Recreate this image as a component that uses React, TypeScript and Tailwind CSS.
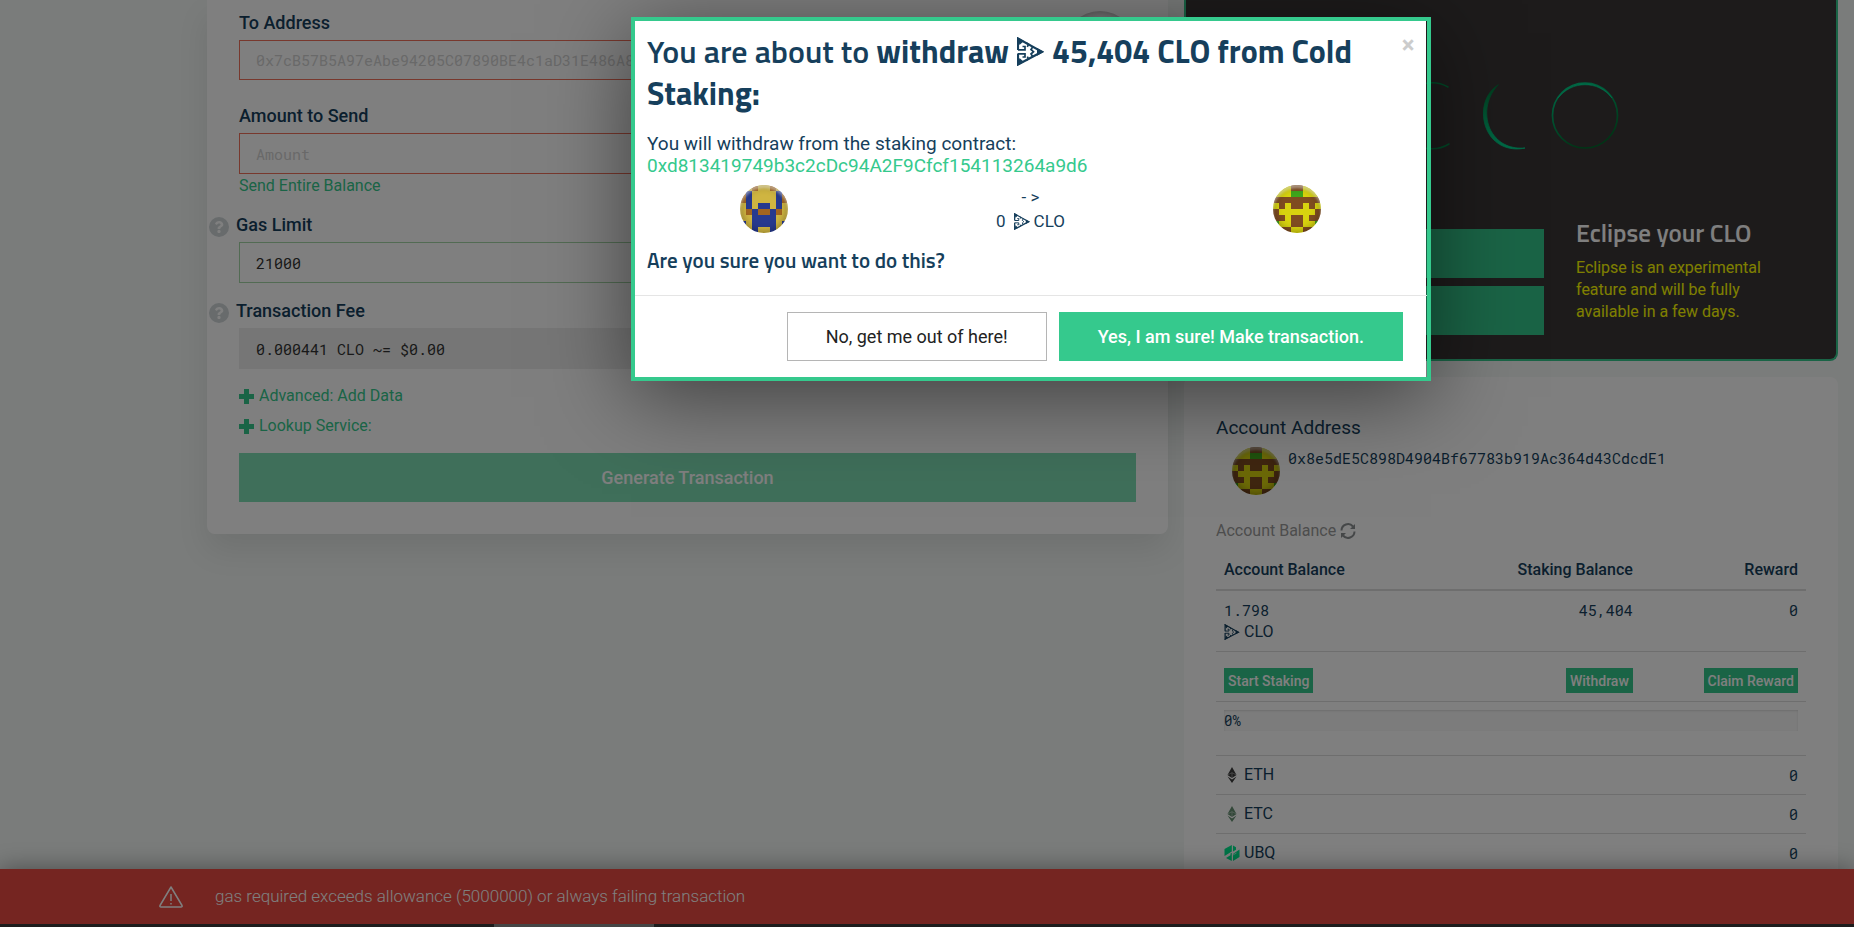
import type { ReactNode } from 'react';
import { FaQuestion } from 'react-icons/fa';

// Identicons are 8x8 and mirrored, so only the left half of each row is stored
const PUMPKIN = {
  colors: ['#d8d30f', '#7f4c20', '#3fa51b'],
  rows: ['0001', '0002', '1111', '0101', '1000', '1101', '2001', '1110'],
};

const CONTRACT = {
  colors: ['#cfb541', '#273a8f', '#a3651f'],
  rows: ['0020', '2100', '2100', '0101', '0212', '0011', '1011', '0010'],
};

const TOKENS = ['ETH', 'ETC', 'UBQ'];

const Identicon = ({ data, label }: { data: typeof PUMPKIN; label: string }) => (
  <div className="relative w-12 h-12 rounded-full overflow-hidden shrink-0">
    <svg viewBox="0 0 8 8" className="block w-full h-full" shapeRendering="crispEdges" role="img" aria-label={label}>
      {data.rows.map((row, y) =>
        (row + row.split('').reverse().join('')).split('').map((c, x) => (
          <rect key={`${x}-${y}`} x={x} y={y} width="1" height="1" fill={data.colors[Number(c)]} />
        ))
      )}
    </svg>
    <div className="absolute inset-0 rounded-full shadow-[inset_0_3px_3px_rgba(255,255,255,0.45),inset_0_0_8px_rgba(0,0,0,0.4)]" />
  </div>
);

const CloLogo = ({ className }: { className?: string }) => (
  <svg viewBox="0 0 27 29" className={className} fill="none" stroke="currentColor" aria-hidden="true">
    <path d="M1 13V1.500L25 14.800L1 27.500V16.500" strokeWidth="2.200" />
    <path d="M0 0l7 4-4.500 4zM0 29l7-4-4.500-4z" fill="currentColor" stroke="none" />
    <path d="M27 14.800l-7-3.900v7.800z" fill="currentColor" stroke="none" />
    <path d="M1 12.800h7V9.500H5.500M1 16.800h7V20H5.500" strokeWidth="1.700" />
    <path d="M9 5.800l2.500 1.600-1.200 2.400M9 23.500l2.500-1.600-1.200-2.200" strokeWidth="1.700" />
    <path d="M16 9.500l-2 3 2.500 2.200-2.500 2.300 2 3" strokeWidth="1.700" />
  </svg>
);

const TokenIcon = ({ name }: { name: string }) => {
  if (name === 'UBQ') {
    return (
      <svg viewBox="0 0 16 16" className="w-4 h-4" fill="#00ea90" aria-hidden="true">
        <path d="M7.800 0v6.500L.5 11V4z" />
        <path d="M2 13l4.500-2.800V8.500l1.300-.8v8.300z" />
        <path d="M9 .5l3 1.700v2.600L9 6.500z" />
        <path d="M15.500 4.500V12L9 16V9l6.500-4.500z" />
        <path d="M9 10l3.500-2" stroke="#fff" strokeWidth=".6" />
      </svg>
    );
  }
  const fill = name === 'ETH' ? '#3c3c3c' : '#669073';
  return (
    <svg viewBox="0 0 16 16" className="w-4 h-4" aria-hidden="true">
      <path d="M8 0l4.500 8L8 11 3.500 8z" fill={fill} />
      <path d="M8 16l4.500-6.500-4.500 3-4.500-3z" fill={fill} />
      <path d="M3.500 8L8 5.700 12.500 8M8 5.700V11" stroke="#fff" strokeWidth=".6" strokeOpacity=".6" fill="none" />
    </svg>
  );
};

const PlusIcon = () => (
  <svg viewBox="0 0 15 15" className="w-[15px] h-[15px]" fill="currentColor" aria-hidden="true">
    <path d="M5 0h5v5h5v5h-5v5H5v-5H0V5h5z" />
  </svg>
);

const RefreshIcon = () => (
  <svg viewBox="0 0 16 16" className="w-4 h-4" fill="none" stroke="#8b8f91" strokeWidth="2" aria-hidden="true">
    <path d="M1.500 7.500A6.500 6.500 0 0 1 13 3.500M14.500 8.500A6.500 6.500 0 0 1 3 12.500" />
    <path d="M15 1v5h-5zM1 15v-5h5z" fill="#8b8f91" stroke="none" />
  </svg>
);

const FieldLabel = ({ htmlFor, children }: { htmlFor: string; children: ReactNode }) => (
  <label htmlFor={htmlFor} className="block mb-[5px] leading-6 text-lg font-medium text-[#163f5c]">
    {children}
  </label>
);

const HelpLabel = ({ htmlFor, children }: { htmlFor: string; children: ReactNode }) => (
  <div className="flex items-start gap-[7px] -ml-[30px]">
    <button
      type="button"
      aria-label="Help"
      className="mt-1 flex items-center justify-center w-5 h-5 rounded-full bg-[#d0d7d9] text-white"
    >
      <FaQuestion className="w-3 h-3" />
    </button>
    <FieldLabel htmlFor={htmlFor}>{children}</FieldLabel>
  </div>
);

const inputClass =
  'block w-full px-4 border font-["Roboto_Mono","Liberation_Mono",monospace] text-[15px] text-[#333] placeholder:text-[#d2d2d2]';

const SendForm = () => (
  <section className="px-8 pt-[11px] pb-8 bg-white rounded-b-lg shadow-[0_16px_32px_rgba(0,0,0,0.09)]">
    <div className="flex gap-4 h-[70px]">
      <div className="flex-1">
        <FieldLabel htmlFor="to">To Address</FieldLabel>
        <input id="to" className={`${inputClass} h-10 border-[#f0705a]`} placeholder="0x7cB57B5A97eAbe94205C07890BE4c1aD31E486A8" />
      </div>
      <div className="w-[72px] h-[72px] rounded-full bg-[#f4f4f4] shadow-[inset_0_2px_6px_rgba(0,0,0,0.25)]" />
    </div>

    <div className="mt-[23px]">
      <FieldLabel htmlFor="amount">Amount to Send</FieldLabel>
      <input id="amount" className={`${inputClass} h-[41px] border-[#f0705a]`} placeholder="Amount" />
      <a href="#balance" className="block leading-[23px] text-base text-[#35c98d]">Send Entire Balance</a>
    </div>

    <div className="mt-4">
      <HelpLabel htmlFor="gas">Gas Limit</HelpLabel>
      <input id="gas" className={`${inputClass} h-[41px] border-[#a5d6a7]`} defaultValue="21000" />
    </div>

    <div className="mt-4">
      <HelpLabel htmlFor="fee">Transaction Fee</HelpLabel>
      <input id="fee" className={`${inputClass} h-[41px] border-[#ececec] bg-[#ececec]`} defaultValue="0.000441 CLO ~= $0.00" readOnly />
    </div>

    <div className="mt-3 text-base leading-[30px] text-[#35c98d]">
      <a href="#advanced" className="flex items-center gap-[5px]">
        <PlusIcon />
        Advanced: Add Data
      </a>
      <a href="#lookup" className="flex items-center gap-[5px]">
        <PlusIcon />
        Lookup Service:
      </a>
    </div>

    <button type="button" className="mt-3 w-full h-[49px] bg-[#7edeb4] text-lg font-medium text-white">
      Generate Transaction
    </button>
  </section>
);

const EclipsePanel = () => (
  <section className="px-8 pb-6 bg-[#3a3637] border-2 border-t-0 border-[#35c98d] rounded-b-lg">
    <svg viewBox="0 0 586 229" className="block w-full" fill="none" strokeLinecap="round" aria-hidden="true">
      <defs>
        <linearGradient id="ring" x1="0" y1="0" x2="0.4" y2="1">
          <stop offset="0" stopColor="#00d890" />
          <stop offset="1" stopColor="#006a2c" />
        </linearGradient>
        <linearGradient id="arc" x1="0" y1="0" x2="0" y2="1">
          <stop offset="0" stopColor="#007a3c" />
          <stop offset="1" stopColor="#00d890" />
        </linearGradient>
      </defs>
      <path d="M230 87A33 33 0 1 0 231 144" stroke="#00904c" strokeWidth="1.500" />
      <path
        d="M280 85C264 95 262 117 270 132C278 147 294 151 307 148C294 149 281 145 273 131C266 117 267 99 280 85Z"
        fill="url(#arc)"
        stroke="url(#arc)"
        strokeWidth="0.800"
      />
      <circle cx="367" cy="115.500" r="32.500" stroke="url(#ring)" strokeWidth="1.700" />
      <path d="M340 98A32.500 32.500 0 0 1 394 98A34 34 0 0 0 340 98Z" fill="#00d890" stroke="#00d890" strokeWidth="0.600" />
    </svg>
    <div className="grid grid-cols-[326fr_228fr] gap-8">
      <div className="flex flex-col gap-2">
        <button type="button" aria-label="Stake" className="h-[49px] bg-[#35c98d]" />
        <button type="button" aria-label="Eclipse" className="h-[49px] bg-[#35c98d]" />
      </div>
      <div className="-mt-[13px]">
        <h3 className="font-['Titillium_Web',Roboto,sans-serif] text-[25px] leading-[34px] font-semibold text-white">Eclipse your CLO</h3>
        <p className="mt-[7px] text-base leading-[22px] text-[#ff0]">
          Eclipse is an experimental feature and will be fully available in a few days.
        </p>
      </div>
    </div>
  </section>
);

const smallButton = 'h-[25px] px-1 bg-[#35c98d] text-sm font-medium text-white';

const AccountPanel = () => (
  <section className="mt-4 px-8 pt-[39px] pb-10 bg-white rounded-lg text-[#163f5c]">
    <h4 className="text-[19px] leading-6">Account Address</h4>
    <div className="flex gap-2 mt-[7px] ml-4">
      <Identicon data={PUMPKIN} label="Account identicon" />
      <p className="font-['Roboto_Mono','Liberation_Mono',monospace] text-[15px] leading-[22px]">
        0x8e5dE5C898D4904Bf67783b919Ac364d43CdcdE1
      </p>
    </div>

    <button type="button" className="flex items-center gap-1 mt-6 text-base leading-6 text-[#9a9a9a]">
      Account Balance
      <RefreshIcon />
    </button>

    <table className="mt-2 w-full border-collapse text-base">
      <thead>
        <tr className="border-b-2 border-[#dcdcdc]">
          <th className="px-2 h-[39px] text-left font-medium">Account Balance</th>
          <th className="px-2 text-right font-medium">Staking Balance</th>
          <th className="w-[28%] px-2 text-right font-medium">Reward</th>
        </tr>
      </thead>
      <tbody>
        <tr className="border-b border-[#dcdcdc] align-top font-['Roboto_Mono','Liberation_Mono',monospace] text-[15px] leading-[22px]">
          <td className="px-2 pt-2 pb-2">
            1.798
            <div className="flex items-center gap-1 font-[Roboto,sans-serif] text-base leading-[22px]">
              <CloLogo className="w-4 h-4" />
              CLO
            </div>
          </td>
          <td className="px-2 pt-2 text-right">45,404</td>
          <td className="px-2 pt-2 text-right">0</td>
        </tr>
        <tr className="border-b border-[#dcdcdc]">
          <td className="px-2 pt-4 pb-2 leading-[0px]">
            <button type="button" className={smallButton}>Start Staking</button>
          </td>
          <td className="px-2 pt-4 pb-2 leading-[0px] text-right">
            <button type="button" className={smallButton}>Withdraw</button>
          </td>
          <td className="px-2 pt-4 pb-2 leading-[0px] text-right">
            <button type="button" className={smallButton}>Claim Reward</button>
          </td>
        </tr>
        <tr className="border-b border-[#dcdcdc]">
          <td colSpan={3} className="px-2 pt-2 pb-6">
            <div className="h-[21px] bg-[#f8f8f8] shadow-[inset_0_1px_2px_rgba(0,0,0,0.12)] font-['Roboto_Mono','Liberation_Mono',monospace] text-sm leading-[21px]">
              0%
            </div>
          </td>
        </tr>
        {TOKENS.map((name) => (
          <tr key={name} className="border-b border-[#dcdcdc]">
            <td colSpan={2} className="px-2 h-[39px]">
              <div className="flex items-center gap-1">
                <TokenIcon name={name} />
                {name}
              </div>
            </td>
            <td className="px-2 text-right font-['Roboto_Mono','Liberation_Mono',monospace] text-[15px]">0</td>
          </tr>
        ))}
      </tbody>
    </table>
  </section>
);

const ErrorBar = () => (
  <footer className="absolute inset-x-0 bottom-0 shadow-[0_0_24px_rgba(0,0,0,0.4)]">
    <div role="alert" className="flex items-center gap-8 h-[55px] pl-[159px] bg-[#ea4a42] text-[17px] font-light text-white">
      <svg viewBox="0 0 24 24" className="w-6 h-6" fill="none" stroke="currentColor" strokeWidth="1.500" strokeLinejoin="round" aria-hidden="true">
        <path d="M12 2L23 20.500Q23.500 22 22 22H2Q.5 22 1 20.500Z" />
        <path d="M12 9v7M12 18v1.500" />
      </svg>
      gas required exceeds allowance (5000000) or always failing transaction
    </div>
    <div className="h-[3px] bg-[#3a3a3a] pl-[494px]">
      <div className="w-40 h-full bg-[#8a8a8a]" />
    </div>
  </footer>
);

const ConfirmModal = () => (
  <div className="absolute inset-0 flex justify-center items-start pt-[17px] pl-[208px] bg-black/50">
    <div
      role="dialog"
      aria-labelledby="confirm-title"
      className="relative w-[800px] border-4 border-[#35c98d] shadow-[0_16px_80px_rgba(0,0,0,0.5)] text-[#163f5c]"
    >
      <button type="button" aria-label="Close" className="absolute top-3 right-[9px] w-5 h-6 text-2xl leading-6 font-bold text-[#ccc]">
        ×
      </button>
      <div className="mr-px px-3 pt-[9px] pb-[19px] bg-white">
        <h2 id="confirm-title" className="pr-14 font-['Titillium_Web',Roboto,sans-serif] text-[32px] leading-[42px] font-semibold">
          You are about to{' '}
          <strong className="font-bold">
            withdraw <CloLogo className="inline-block w-[27px] h-[29px] mx-px -mt-2" /> 45,404 CLO from Cold Staking:
          </strong>
        </h2>
        <p className="mt-[19px] text-[19px] leading-[22px]">
          You will withdraw from the staking contract:
          <a href="#contract" className="block text-[#35c98d]">0xd813419749b3c2cDc94A2F9Cfcf154113264a9d6</a>
        </p>
        <div className="grid grid-cols-3 -mx-4 mt-2 justify-items-center text-[17px] leading-6">
          <Identicon data={CONTRACT} label="Staking contract identicon" />
          <div className="text-center">
            <p>- &gt;</p>
            <p className="flex items-center gap-1">
              0 <CloLogo className="w-4 h-[17px] ml-1" /> CLO
            </p>
          </div>
          <Identicon data={PUMPKIN} label="Account identicon" />
        </div>
        <p className="mt-[11px] font-['Titillium_Web',Roboto,sans-serif] text-[21px] leading-8 font-semibold">
          Are you sure you want to do this?
        </p>
      </div>
      <div className="border-t border-[#e5e5e5]">
        <div className="mr-px flex justify-end gap-3 pt-4 pb-4 pr-[23px] bg-white text-lg">
          <button type="button" className="h-[49px] px-[38px] border border-[#b5b5b5] text-[#222]">No, get me out of here!</button>
          <button type="button" className="h-[49px] px-[39px] bg-[#35c98d] font-medium text-white">Yes, I am sure! Make transaction.</button>
        </div>
      </div>
    </div>
  </div>
);

const App = () => (
  <div className="relative h-screen overflow-hidden bg-[#f4f8f6] font-[Roboto,sans-serif]">
    <main className="grid grid-cols-[961fr_654fr] items-start gap-4 pl-[207px] pr-4">
      <SendForm />
      <div>
        <EclipsePanel />
        <AccountPanel />
      </div>
    </main>
    <ErrorBar />
    <ConfirmModal />
  </div>
);

export default App;
